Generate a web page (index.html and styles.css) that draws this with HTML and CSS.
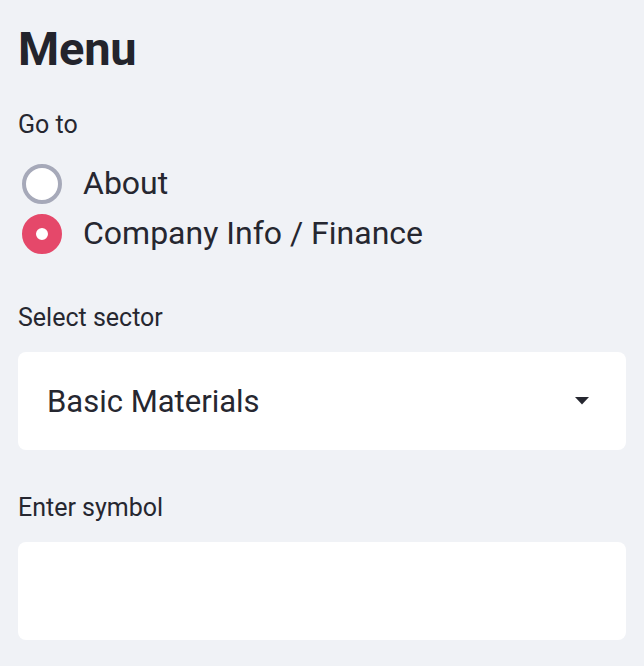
FILE: index.html
```html
<!DOCTYPE html>
<html lang="en">
<head>
<meta charset="utf-8">
<title>Menu</title>
<link rel="stylesheet" href="styles.css">
</head>
<body>
<aside class="sidebar">
  <h1 class="title">Menu</h1>

  <div class="widget radio-widget">
    <div class="label">Go to</div>
    <div class="radio-group">
      <label class="radio">
        <span class="radio-dot"></span>
        <span class="radio-text">About</span>
      </label>
      <label class="radio checked">
        <span class="radio-dot"></span>
        <span class="radio-text">Company Info / Finance</span>
      </label>
    </div>
  </div>

  <div class="widget">
    <div class="label">Select sector</div>
    <div class="box select">
      <span class="select-value">Basic Materials</span>
      <svg class="caret" width="14" height="8" viewBox="0 0 14 8" aria-hidden="true"><path d="M0 0H14L7 7.5Z" fill="#262730"/></svg>
    </div>
  </div>

  <div class="widget">
    <div class="label">Enter symbol</div>
    <div class="box input"></div>
  </div>
</aside>
</body>
</html>
```
FILE: styles.css
```css
html, body {
  margin: 0;
  padding: 0;
  background: #f0f2f6;
}

body {
  font-family: Roboto, "Noto Sans", sans-serif;
  color: #262730;
}

.sidebar {
  display: flex;
  flex-direction: column;
  padding: 19px 18px 0 18px;
}

.title {
  margin: 0;
  font-size: 47px;
  font-weight: 700;
  line-height: 60px;
  color: #23242c;
  letter-spacing: -0.2px;
}

.widget {
  display: flex;
  flex-direction: column;
}

.radio-widget {
  margin-top: 30px;
}

.label {
  font-size: 25px;
  line-height: 32px;
  height: 32px;
}

.radio-group {
  display: flex;
  flex-direction: column;
  margin-top: 18px;
}

.radio {
  display: flex;
  align-items: center;
  height: 50px;
  padding-left: 4px;
}

.radio-dot {
  box-sizing: border-box;
  width: 40px;
  height: 40px;
  border-radius: 50%;
  background: #ffffff;
  border: 4px solid #a6a9b9;
  flex: none;
}

.radio.checked .radio-dot {
  border: 14px solid #e5486a;
  background: #ffffff;
}

.radio-text {
  margin-left: 21px;
  font-size: 32px;
  line-height: 50px;
  position: relative;
  top: -1px;
}

.widget + .widget {
  margin-top: 42px;
}

.radio-widget + .widget {
  margin-top: 43px;
}

.box {
  margin-top: 18px;
  height: 98px;
  box-sizing: border-box;
  background: #ffffff;
  border-radius: 8px;
}

.select {
  display: flex;
  align-items: center;
  justify-content: space-between;
  padding: 0 37px 0 29px;
}

.select-value {
  font-size: 31px;
  line-height: 40px;
  position: relative;
  top: 1px;
}

.caret {
  display: block;
  flex: none;
}
```
